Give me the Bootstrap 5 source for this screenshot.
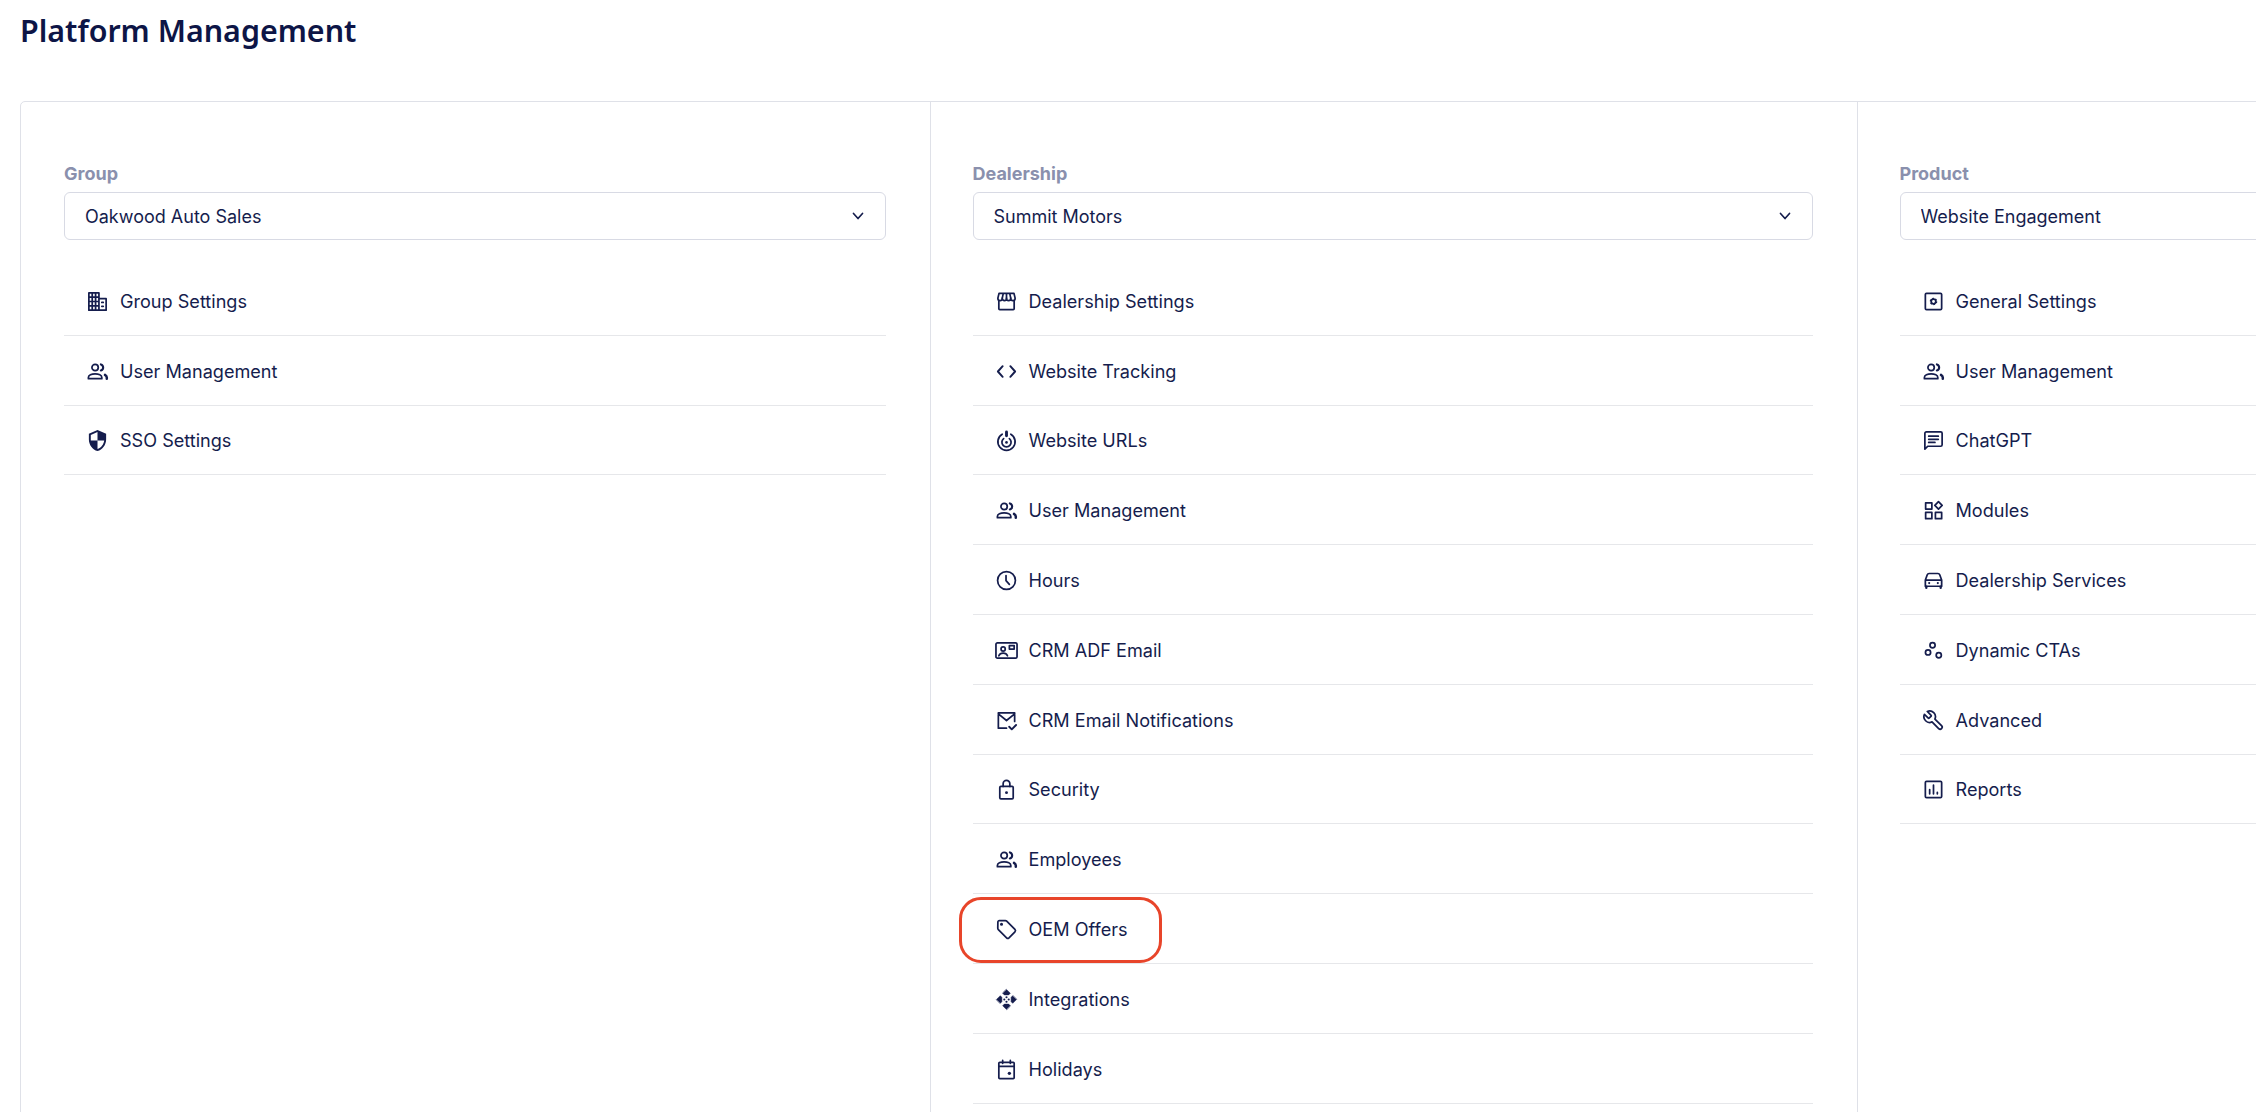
<!DOCTYPE html>
<html lang="en">
<head>
  <meta charset="UTF-8" />
  <meta name="viewport" content="width=device-width, initial-scale=1.0">
  <title>Platform Management</title>
  <link href="https://cdn.jsdelivr.net/npm/bootstrap@5.3.2/dist/css/bootstrap.min.css" rel="stylesheet">
  <style>
    html, body {
      height: 1112px;
      overflow: hidden;
    }
    body {
      font-family: "Inter", "Liberation Sans", sans-serif;
      color: #151d4d;
      background-color: #fff;
      padding: 0 0 0 20px;
    }
    .page-title {
      font-family: "Noto Sans", "Liberation Sans", sans-serif;
      font-size: 30.4px;
      font-weight: 600;
      line-height: 40px;
      color: #0d1546;
      margin: 0;
      padding: 11px 0 50px 0;
    }
    .settings-board {
      display: flex;
      width: 2700px;
      min-height: 1100px;
      border: 1px solid #dfe1e8;
      border-radius: 5px;
    }
    .board-col {
      padding: 60px 44px 0 41.5px;
      flex: none;
    }
    .board-col + .board-col {
      border-left: 1px solid #dfe1e8;
    }
    .col-group { width: 909px; padding-left: 43px; }
    .col-dealership { width: 927px; }
    .col-product { width: 860px; }
    .field-label {
      display: block;
      font-size: 18px;
      font-weight: 700;
      line-height: 23px;
      color: #8a90ad;
      margin-bottom: 7px;
    }
    .board-select.form-select {
      height: 48px;
      font-size: 18px;
      font-weight: 400;
      color: #151d4d;
      border: 1px solid #d8dae4;
      border-radius: 6px;
      padding: 0 40px 0 20px;
      background-size: 16px 16px;
      background-position: right 19px center;
      background-image: url("data:image/svg+xml,%3csvg xmlns='http://www.w3.org/2000/svg' viewBox='0 0 16 16'%3e%3cpath fill='none' stroke='%23151d4d' stroke-width='1.7' stroke-linecap='round' stroke-linejoin='round' d='M3.500 5.500 8 10.500l4.500-5'/%3e%3c/svg%3e");
    }
    .menu-rows {
      margin-top: 26px;
      border-radius: 0;
    }
    .menu-rows .list-group-item,
    .menu-rows .list-group-item:last-child {
      display: flex;
      align-items: center;
      gap: 11px;
      height: 69.8px;
      padding: 2px 0 0 22px;
      font-size: 18.1px;
      font-weight: 400;
      color: #151d4d;
      border-width: 0 0 1px;
      border-color: #e6e7ea;
      background: transparent;
    }
    .row-icon {
      width: 23px;
      height: 23px;
      flex: none;
      fill: none;
      stroke: currentColor;
      stroke-width: 1.8;
      stroke-linecap: round;
      stroke-linejoin: round;
    }
    .oem-callout {
      position: absolute;
      left: -14px;
      top: 3px;
      width: 203px;
      height: 66px;
      border: 3px solid #e8452a;
      border-radius: 22px;
      pointer-events: none;
    }
  </style>
</head>
<body>
  <svg width="0" height="0" class="position-absolute">
    <symbol id="i-building" viewBox="0 0 24 24">
      <path d="M3 21V3h10.500v18zM13.500 9H21v12H13.500M3 21h18M3 7.500h10.500M3 12h10.500M3 16.500h10.500M6.500 3v18M10 3v18"/>
      <path d="M16.500 13h1.500M16.500 17h1.500"/>
    </symbol>
    <symbol id="i-users" viewBox="0 0 24 24">
      <circle cx="9.500" cy="7.800" r="3.300"/>
      <path d="M2.500 19.500v-1.300c0-2.300 3.300-3.700 7-3.700s7 1.400 7 3.700v1.300z"/>
      <path stroke-width="2.200" d="M15.500 4.600c1.600.5 2.400 1.800 2.400 3.200s-.8 2.700-2.400 3.200"/>
      <path stroke-width="2.600" d="M19.800 15.500c1.100.7 1.900 1.500 1.900 2.700v1.300"/>
    </symbol>
    <symbol id="i-shield" viewBox="0 0 24 24">
      <path stroke="none" fill="currentColor" d="M12 1L3 5v6c0 5.550 3.840 10.740 9 12 5.160-1.260 9-6.450 9-12V5l-9-4zm0 10.990h7c-.53 4.120-3.280 7.790-7 8.940V12H5V6.300l7-3.110v8.800z"/>
    </symbol>
    <symbol id="i-store" viewBox="0 0 24 24">
      <path d="M4.200 3.500h15.600L21 8.500c0 1.400-1 2.500-2.300 2.500s-2.300-1-2.300-2.500c0 1.500-1 2.500-2.200 2.500S12 10 12 8.500C12 10 11 11 9.800 11S7.600 10 7.600 8.500C7.600 10 6.600 11 5.300 11S3 9.900 3 8.500z"/>
      <path d="M4 11v8.500a1 1 0 0 0 1 1h14a1 1 0 0 0 1-1V11M8.500 4 7.600 8.500M12 4v4.500M15.500 4l.9 4.500"/>
    </symbol>
    <symbol id="i-code" viewBox="0 0 24 24">
      <path stroke-width="2" d="M8 6.500 3 12l5 5.500M16 6.500l5 5.500-5 5.500"/>
    </symbol>
    <symbol id="i-target" viewBox="0 0 24 24">
      <path d="M7.500 5.500a9 9 0 1 0 9 0"/>
      <path d="M9 10a4.800 4.800 0 1 0 6 0"/>
      <path stroke-width="3" d="M12 3v4"/>
      <circle cx="12" cy="14" r="1.400" fill="currentColor" stroke="none"/>
    </symbol>
    <symbol id="i-clock" viewBox="0 0 24 24">
      <circle cx="12" cy="12" r="9.300"/>
      <path d="M11.500 6.800v5.400l3.500 3.800"/>
    </symbol>
    <symbol id="i-contact" viewBox="0 0 24 24">
      <rect x="1" y="4" width="22" height="16" rx="1.500"/>
      <circle cx="8.500" cy="10.500" r="2.200"/>
      <path d="M4 17.500c.8-2 2.500-2.800 4.500-2.800s3.700.8 4.500 2.800M15 6.800h5v3.700h-5z"/>
    </symbol>
    <symbol id="i-mail" viewBox="0 0 24 24">
      <path d="M12 20H3.500V4h17v9M3.500 5 12 12l8.500-7"/>
      <path stroke-width="2" d="M14.800 18.500l2.700 2.700 4.500-4.500"/>
    </symbol>
    <symbol id="i-lock" viewBox="0 0 24 24">
      <rect x="5" y="8.800" width="14" height="13" rx="1.200"/>
      <path d="M8.500 8.800V6a3.500 3.500 0 0 1 7 0v2.800"/>
      <circle cx="12" cy="15.300" r="1.500" fill="currentColor" stroke="none"/>
    </symbol>
    <symbol id="i-tag" viewBox="0 0 24 24">
      <path d="M3 4.200A1.500 1.500 0 0 1 4.500 2.700h6.300a2 2 0 0 1 1.400.6l8.600 8.600a1.800 1.800 0 0 1 0 2.500l-6.200 6.300a1.800 1.800 0 0 1-2.500 0l-8.600-8.600a2 2 0 0 1-.6-1.400z"/>
      <circle cx="6.800" cy="6.500" r=".7" fill="currentColor"/>
    </symbol>
    <symbol id="i-nodes" viewBox="0 0 24 24">
      <g fill="currentColor" stroke="currentColor" stroke-width=".5">
        <path d="M12 1.500 16 5.500 14.300 7.200H9.700L8 5.500z"/>
        <path d="M12 22.500 8 18.500 9.700 16.800h4.600L16 18.500z"/>
        <path d="M1.500 12 5.500 8 7.200 9.700v4.600L5.500 16z"/>
        <path d="M22.500 12 18.500 16 16.800 14.300V9.700L18.500 8z"/>
      </g>
      <g fill="currentColor" stroke="none">
        <circle cx="12" cy="9.700" r="1.100"/>
        <circle cx="12" cy="14.300" r="1.100"/>
        <circle cx="9.700" cy="12" r="1.100"/>
        <circle cx="14.300" cy="12" r="1.100"/>
      </g>
    </symbol>
    <symbol id="i-calendar" viewBox="0 0 24 24">
      <rect x="4" y="4.500" width="16" height="17" rx="1"/>
      <path d="M4 8.800h16M8 2.500v3M16 2.500v3"/>
      <circle cx="15" cy="16" r="1.700" fill="currentColor" stroke="none"/>
    </symbol>
    <symbol id="i-gearbox" viewBox="0 0 24 24">
      <rect x="3.500" y="3.500" width="17" height="17" rx="1.200"/>
      <circle cx="12" cy="12" r="2.400"/>
      <circle cx="12" cy="12" r="3.300" stroke-width="1.300" stroke-linecap="butt" stroke-dasharray="1.700 1.760"/>
    </symbol>
    <symbol id="i-chat" viewBox="0 0 24 24">
      <path d="M3 21V4.500a1.500 1.500 0 0 1 1.500-1.500h15A1.500 1.500 0 0 1 21 4.500v12a1.500 1.500 0 0 1-1.500 1.500H6z"/>
      <path d="M7 7.500h10M7 10.800h10M7 14h6.500"/>
    </symbol>
    <symbol id="i-modules" viewBox="0 0 24 24">
      <rect x="3.800" y="4" width="6.500" height="6.500"/>
      <rect x="3.800" y="14" width="6.500" height="6.500"/>
      <rect x="14" y="14" width="6.500" height="6.500"/>
      <path d="M17.200 2.800l3.800 3.900-3.800 3.800-3.800-3.800z"/>
    </symbol>
    <symbol id="i-car" viewBox="0 0 24 24">
      <path d="M3.500 11.500 5.500 6a2 2 0 0 1 1.900-1.300h9.200A2 2 0 0 1 18.500 6l2 5.500M3.500 11.500h17v6.500h-17z"/>
      <path stroke-width="2.400" d="M4.500 18.500v1.200M19.500 18.500v1.200"/>
      <circle cx="7.500" cy="14.700" r="1.100" fill="currentColor" stroke="none"/>
      <circle cx="16.500" cy="14.700" r="1.100" fill="currentColor" stroke="none"/>
    </symbol>
    <symbol id="i-dots" viewBox="0 0 24 24">
      <circle cx="11" cy="6.500" r="2.700"/>
      <circle cx="6.300" cy="14" r="2.700"/>
      <circle cx="17.500" cy="17" r="2.700"/>
    </symbol>
    <symbol id="i-wrench" viewBox="0 0 24 24">
      <path transform="matrix(-1 0 0 1 24 0)" d="M14.700 6.300a1 1 0 0 0 0 1.400l1.600 1.600a1 1 0 0 0 1.400 0l3.770-3.770a6 6 0 0 1-7.940 7.940l-6.910 6.910a2.120 2.120 0 0 1-3-3l6.910-6.910a6 6 0 0 1 7.940-7.940l-3.760 3.760z"/>
    </symbol>
    <symbol id="i-report" viewBox="0 0 24 24">
      <rect x="3.500" y="3.500" width="17" height="17" rx="1.200"/>
      <path d="M8 16.500v-4.500M12 16.500V7.500M16 16.500V15"/>
    </symbol>
  </svg>

  <h1 class="page-title">Platform Management</h1>

  <div class="settings-board">
    <div class="board-col col-group">
      <label class="field-label">Group</label>
      <select class="form-select board-select"><option>Oakwood Auto Sales</option></select>
      <ul class="list-group list-group-flush menu-rows">
        <li class="list-group-item"><svg class="row-icon"><use href="#i-building"/></svg>Group Settings</li>
        <li class="list-group-item"><svg class="row-icon"><use href="#i-users"/></svg>User Management</li>
        <li class="list-group-item"><svg class="row-icon"><use href="#i-shield"/></svg>SSO Settings</li>
      </ul>
    </div>
    <div class="board-col col-dealership">
      <label class="field-label">Dealership</label>
      <select class="form-select board-select"><option>Summit Motors</option></select>
      <ul class="list-group list-group-flush menu-rows">
        <li class="list-group-item"><svg class="row-icon"><use href="#i-store"/></svg>Dealership Settings</li>
        <li class="list-group-item"><svg class="row-icon"><use href="#i-code"/></svg>Website Tracking</li>
        <li class="list-group-item"><svg class="row-icon"><use href="#i-target"/></svg>Website URLs</li>
        <li class="list-group-item"><svg class="row-icon"><use href="#i-users"/></svg>User Management</li>
        <li class="list-group-item"><svg class="row-icon"><use href="#i-clock"/></svg>Hours</li>
        <li class="list-group-item"><svg class="row-icon"><use href="#i-contact"/></svg>CRM ADF Email</li>
        <li class="list-group-item"><svg class="row-icon"><use href="#i-mail"/></svg>CRM Email Notifications</li>
        <li class="list-group-item"><svg class="row-icon"><use href="#i-lock"/></svg>Security</li>
        <li class="list-group-item"><svg class="row-icon"><use href="#i-users"/></svg>Employees</li>
        <li class="list-group-item position-relative"><svg class="row-icon"><use href="#i-tag"/></svg>OEM Offers<span class="oem-callout"></span></li>
        <li class="list-group-item"><svg class="row-icon"><use href="#i-nodes"/></svg>Integrations</li>
        <li class="list-group-item"><svg class="row-icon"><use href="#i-calendar"/></svg>Holidays</li>
      </ul>
    </div>
    <div class="board-col col-product">
      <label class="field-label">Product</label>
      <select class="form-select board-select"><option>Website Engagement</option></select>
      <ul class="list-group list-group-flush menu-rows">
        <li class="list-group-item"><svg class="row-icon"><use href="#i-gearbox"/></svg>General Settings</li>
        <li class="list-group-item"><svg class="row-icon"><use href="#i-users"/></svg>User Management</li>
        <li class="list-group-item"><svg class="row-icon"><use href="#i-chat"/></svg>ChatGPT</li>
        <li class="list-group-item"><svg class="row-icon"><use href="#i-modules"/></svg>Modules</li>
        <li class="list-group-item"><svg class="row-icon"><use href="#i-car"/></svg>Dealership Services</li>
        <li class="list-group-item"><svg class="row-icon"><use href="#i-dots"/></svg>Dynamic CTAs</li>
        <li class="list-group-item"><svg class="row-icon"><use href="#i-wrench"/></svg>Advanced</li>
        <li class="list-group-item"><svg class="row-icon"><use href="#i-report"/></svg>Reports</li>
      </ul>
    </div>
  </div>

  <script src="https://cdn.jsdelivr.net/npm/bootstrap@5.3.2/dist/js/bootstrap.bundle.min.js"></script>
</body>
</html>
